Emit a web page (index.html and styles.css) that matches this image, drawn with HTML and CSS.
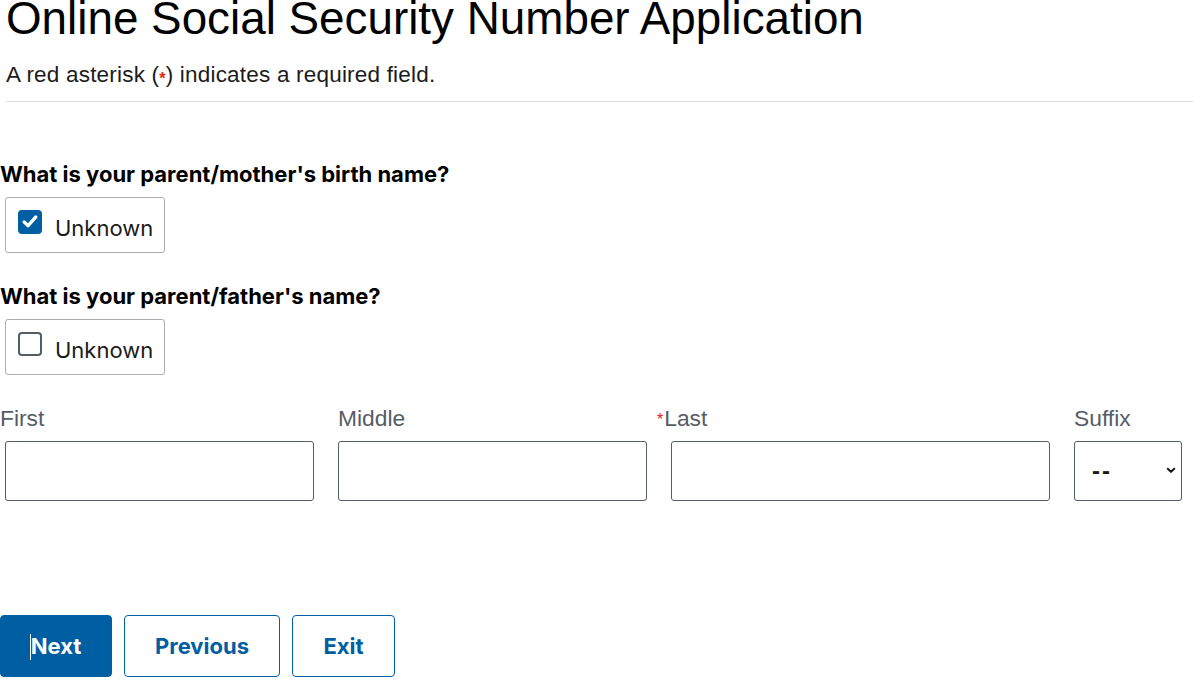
FILE: index.html
```html
<!DOCTYPE html>
<html lang="en">
<head>
<meta charset="utf-8">
<title>Online Social Security Number Application</title>
<link rel="stylesheet" href="styles.css">
</head>
<body>
<header class="page-head">
  <h1 class="title">Online Social Security Number Application</h1>
  <p class="note">A red asterisk (<span class="req">*</span>) indicates a required field.</p>
</header>
<main class="form">
  <fieldset class="group">
    <legend class="question">What is your parent/mother's birth name?</legend>
    <label class="check-tile">
      <span class="box checked"><svg viewBox="0 0 24 24" width="24" height="24"><path d="M5 12.5 L9.8 17 L19 6.5" fill="none" stroke="#fff" stroke-width="4" stroke-linecap="round" stroke-linejoin="round"/></svg></span>
      <span class="check-text">Unknown</span>
    </label>
  </fieldset>
  <fieldset class="group">
    <legend class="question">What is your parent/father's name?</legend>
    <label class="check-tile">
      <span class="box"></span>
      <span class="check-text">Unknown</span>
    </label>
  </fieldset>
  <div class="name-row">
    <div class="field f-first">
      <label class="flabel lab-first">First</label>
      <div class="input"></div>
    </div>
    <div class="field f-middle">
      <label class="flabel">Middle</label>
      <div class="input"></div>
    </div>
    <div class="field f-last">
      <label class="flabel lab-last"><span class="req small">*</span>Last</label>
      <div class="input"></div>
    </div>
    <div class="field f-suffix">
      <label class="flabel">Suffix</label>
      <div class="input select"><span class="sel-val">--</span><svg class="chev" viewBox="0 0 10 6" width="10" height="6"><path d="M1.2 1.2 L5 4.8 L8.8 1.2" fill="none" stroke="#111" stroke-width="1.9"/></svg></div>
    </div>
  </div>
  <div class="actions">
    <button class="btn primary"><span class="caret"></span>Next</button>
    <button class="btn outline btn-prev">Previous</button>
    <button class="btn outline btn-exit">Exit</button>
  </div>
</main>
</body>
</html>
```
FILE: styles.css
```css
html, body {
  margin: 0;
  padding: 0;
  background: #fff;
  color: #1b1b1b;
}
body {
  font-family: "Liberation Sans", Arial, sans-serif;
  width: 1193px;
  height: 698px;
  overflow: hidden;
}
.page-head {
  padding-left: 6px;
}
.title {
  margin: 0;
  font-family: "Liberation Sans", Arial, sans-serif;
  font-weight: 400;
  font-size: 45.8px;
  line-height: 38px;
  color: #000;
  white-space: nowrap;
}
.note {
  margin: 24px 0 0 0;
  font-family: "Liberation Sans", Arial, sans-serif;
  font-size: 22.5px;
  letter-spacing: 0.2px;
  line-height: 26px;
  padding-bottom: 9px;
  border-bottom: 1px solid #dcdcdc;
  color: #1b1b1b;
}
.req {
  color: #e52207;
  font-size: 16px;
  font-weight: 700;
  vertical-align: -2px;
}
.form {
  padding-top: 59px;
}
.group {
  border: 0;
  margin: 0 0 30px 0;
  padding: 0;
  min-width: 0;
}
.question {
  padding: 0;
  font-family: "Inter", sans-serif;
  font-weight: 700;
  font-size: 22px;
  line-height: 26px;
  color: #000;
  margin-bottom: 10px;
}
.check-tile {
  display: flex;
  align-items: center;
  gap: 13px;
  box-sizing: border-box;
  width: 160px;
  height: 56px;
  margin-left: 5px;
  padding: 0 0 0 12px;
  border: 1px solid #a9aeb1;
  border-radius: 3px;
  background: #fff;
}
.box {
  box-sizing: border-box;
  width: 24px;
  height: 24px;
  border: 2px solid #565c65;
  border-radius: 4px;
  margin-top: -7px;
  display: flex;
  align-items: center;
  justify-content: center;
}
.box.checked {
  background: #005ea2;
  border-color: #005ea2;
}
.box svg {
  width: 21px;
  height: 21px;
}
.check-text {
  font-family: "Inter", sans-serif;
  font-size: 22px;
  margin-top: 6px;
  color: #1b1b1b;
}
.name-row {
  display: flex;
  gap: 24px;
  margin-top: 30px;
  padding-left: 5px;
}
.field {
  display: flex;
  flex-direction: column;
}
.f-first, .f-middle { width: 309px; }
.f-last { width: 379px; }
.f-suffix { width: 108px; }
.flabel {
  font-family: "Liberation Sans", Arial, sans-serif;
  font-size: 22.8px;
  line-height: 26px;
  color: #565c65;
  height: 26px;
  margin-bottom: 10px;
}
.lab-first { margin-left: -5px; }
.lab-last { margin-left: -14px; }
.req.small {
  font-size: 16px;
  font-weight: 400;
  vertical-align: 1px;
  margin-right: 1px;
}
.input {
  box-sizing: border-box;
  height: 60px;
  border: 1px solid #565c65;
  border-radius: 3px;
  background: #fff;
}
.select {
  display: flex;
  align-items: center;
  justify-content: space-between;
  padding: 0 5px 0 17px;
}
.sel-val {
  font-family: "Liberation Sans", sans-serif;
  font-weight: 700;
  font-size: 24px;
  letter-spacing: 2px;
  margin-top: 0;
  color: #1b1b1b;
}
.chev { margin-bottom: 3px; }
.actions {
  display: flex;
  gap: 12px;
  margin-top: 114px;
}
.btn {
  box-sizing: border-box;
  height: 62px;
  border-radius: 4px;
  font-family: "Inter", sans-serif;
  font-weight: 700;
  font-size: 22px;
  padding: 0;
  cursor: pointer;
  position: relative;
}
.primary {
  width: 112px;
  background: #005ea2;
  border: 1px solid #005ea2;
  color: #fff;
}
.outline {
  background: #fff;
  border: 1px solid #005ea2;
  color: #005ea2;
}
.btn-prev { width: 156px; }
.btn-exit { width: 103px; }
.caret {
  position: absolute;
  left: 29px;
  top: 18px;
  width: 1px;
  height: 26px;
  background: #fff;
}
```
